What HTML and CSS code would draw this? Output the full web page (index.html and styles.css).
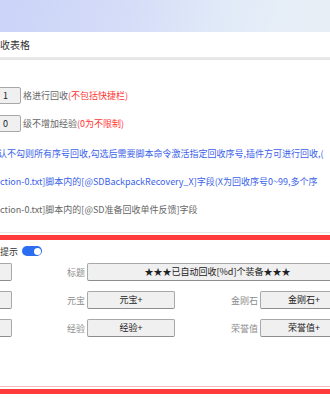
FILE: index.html
```html
<!DOCTYPE html>
<html lang="zh-CN">
<head>
    <meta charset="UTF-8">
    <meta name="viewport" content="width=device-width, initial-scale=1.0">
    <title>回收表格</title>
    <link rel="stylesheet" href="styles.css">
</head>
<body>
    <div class="banner"></div>
    <div class="title-bar">收表格</div>
    <div class="title-shadow"></div>

    <div class="settings">
        <div class="row">
            <input class="num" type="text" value="1">
            <span class="desc">格进行回收</span><span class="warn">(不包括快捷栏)</span>
        </div>
        <div class="row">
            <input class="num" type="text" value="0">
            <span class="desc">级不增加经验</span><span class="warn">(0为不限制)</span>
        </div>
        <div class="row text-row first-text">
            <span class="note cut">认不勾则所有序号回收,勾选后需要脚本命令激活指定回收序号,插件方可进行回收,(</span>
        </div>
        <div class="row text-row">
            <span class="note">ction-0.txt]脚本内的[@SDBackpackRecovery_X]字段(X为回收序号0~99,多个序</span>
        </div>
        <div class="row text-row">
            <span class="desc">ction-0.txt]脚本内的[@SD准备回收单件反馈]字段</span>
        </div>
    </div>

    <div class="divider"></div>

    <div class="notice">
        <div class="toggle-row">
            <span class="toggle-label">提示</span>
            <span class="switch"><span class="knob"></span></span>
        </div>
        <div class="fields">
            <div class="box"></div>
            <span class="label">标题</span>
            <div class="box wide">★★★已自动回收[%d]个装备★★★</div>

            <div class="box"></div>
            <span class="label">元宝</span>
            <div class="box">元宝+</div>
            <span class="label">金刚石</span>
            <div class="box">金刚石+</div>

            <div class="box"></div>
            <span class="label">经验</span>
            <div class="box">经验+</div>
            <span class="label">荣誉值</span>
            <div class="box">荣誉值+</div>
        </div>
        <div class="notice-end"></div>
    </div>
</body>
</html>
```

FILE: styles.css
```css
body {
    margin: 0;
    font-family: "Noto Sans CJK SC", "Noto Sans", sans-serif;
    font-size: 9px;
    color: #333;
    background: #fff;
    overflow: hidden;
    width: 330px;
    height: 410px;
}
.banner {
    height: 32px;
    background: linear-gradient(100deg, #cbd3f8 0%, #d6ddf8 40%, #e0e9f8 65%, #e6eef7 85%, #e9eef6 100%);
}
.title-bar {
    height: 25px;
    line-height: 25px;
    font-size: 10px;
    color: #333;
    white-space: nowrap;
}
.title-shadow {
    height: 3px;
    background: linear-gradient(#ececec, #e4e4e4);
}
.settings {
    padding-top: 21px;
}
.row {
    display: flex;
    align-items: center;
    height: 28px;
    white-space: nowrap;
}
.text-row {
    height: 28px;
}
.first-text {
    margin-top: 2px;
}
.num {
    box-sizing: border-box;
    width: 23px;
    height: 17px;
    margin: 0 2px 0 -2px;
    padding: 0 0 0 4px;
    border: 1px solid #a8a8a8;
    border-radius: 2px;
    background: #f0f0f0;
    font-family: inherit;
    font-size: 9px;
    color: #222;
}
.desc {
    color: #666;
}
.warn {
    color: #ff3535;
}
.note {
    color: #3a62e8;
}
.cut {
    margin-left: -2px;
}
.divider {
    height: 1px;
    margin-top: 9px;
    background: #e6e6e6;
}
.notice {
    margin-top: 2px;
    border-top: 5px solid #ff3b3b;
    border-bottom: 5px solid #ff3b3b;
}
.toggle-row {
    display: flex;
    align-items: center;
    gap: 4px;
    height: 22px;
}
.toggle-label {
    color: #333;
}
.switch {
    display: flex;
    justify-content: flex-end;
    align-items: center;
    box-sizing: border-box;
    width: 20px;
    height: 10px;
    padding: 0 1.5px;
    border-radius: 5px;
    background: #2b6ef2;
}
.knob {
    width: 7px;
    height: 7px;
    border-radius: 50%;
    background: #fff;
}
.fields {
    display: grid;
    grid-template-columns: 88px 75px 88px 85px 88px;
    grid-auto-rows: 18px;
    row-gap: 10px;
    margin: 1px 0 0 -76px;
    align-items: center;
}
.label {
    padding-right: 2px;
    text-align: right;
    color: #8c8c8c;
}
.box {
    box-sizing: border-box;
    height: 18px;
    line-height: 16px;
    border: 1px solid #a8a8a8;
    border-bottom-color: #8e8e8e;
    border-radius: 2px;
    background: #f0f0f0;
    text-align: center;
    color: #222;
    white-space: nowrap;
}
.wide {
    grid-column: 3 / 6;
}
.notice-end {
    height: 1px;
    margin-top: 49px;
    background: #f9b9b9;
    margin-bottom: 2px;
}
```
